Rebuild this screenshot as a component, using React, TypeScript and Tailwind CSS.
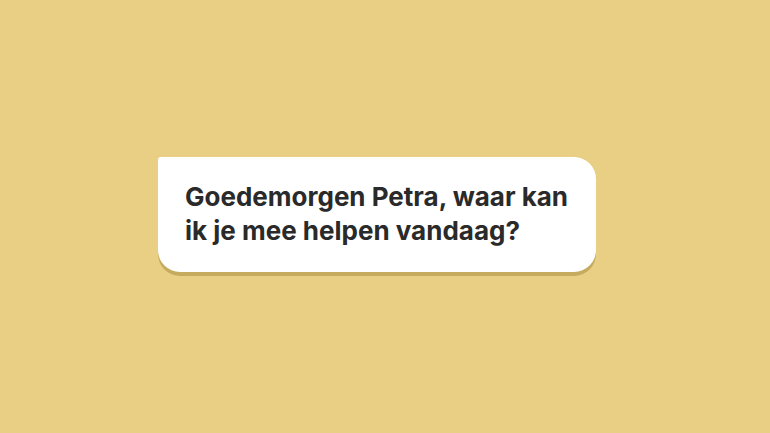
export default function App() {
  return (
    <div className="w-[770px] h-[433px] bg-[#e8cf84] flex items-center justify-center">
      <div className="mr-[16px] mt-[-4px] w-[438px] rounded-[22px] rounded-tl-[3px] bg-white shadow-[0_4px_0_#c6ab5f] pl-[27px] pr-[20px] pt-[23px] pb-[24px]">
        <p className="font-['Inter',sans-serif] font-bold text-[26px] leading-[34px] text-[#2a2a2a]">
          Goedemorgen Petra, waar kan ik je mee helpen vandaag?
        </p>
      </div>
    </div>
  );
}
